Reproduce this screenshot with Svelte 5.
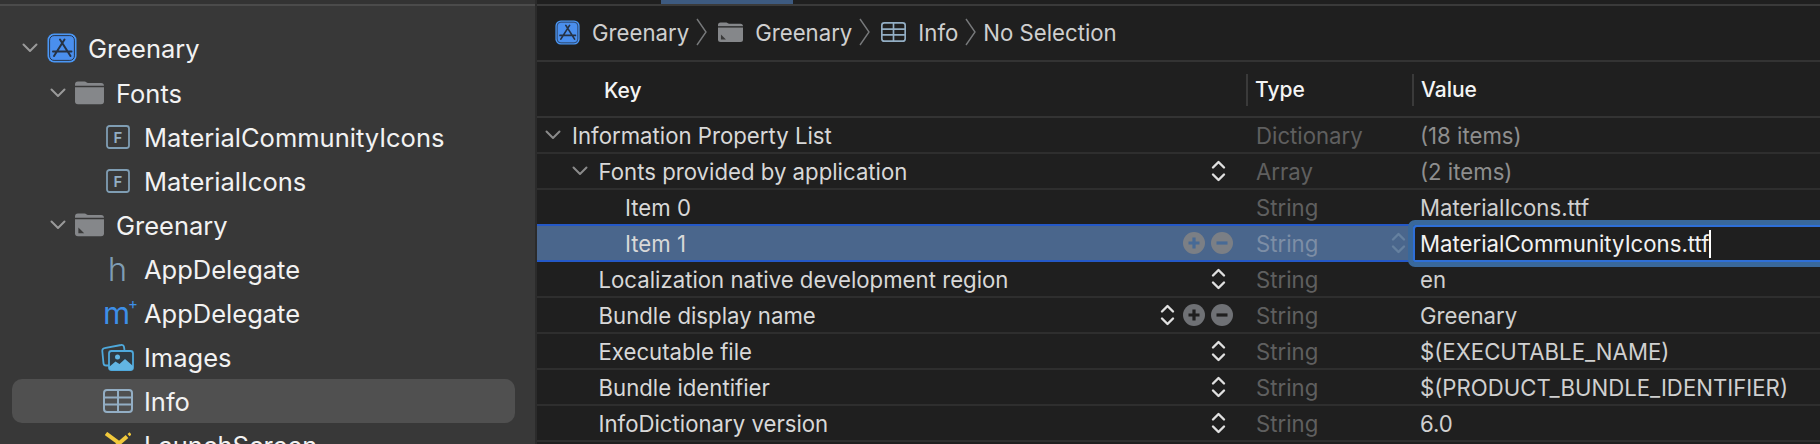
<script>
	const tree = [
		{ depth: 0, open: true, icon: 'app', label: 'Greenary' },
		{ depth: 1, open: true, icon: 'folder', label: 'Fonts' },
		{ depth: 2, icon: 'font', label: 'MaterialCommunityIcons' },
		{ depth: 2, icon: 'font', label: 'MaterialIcons' },
		{ depth: 1, open: true, icon: 'target', label: 'Greenary' },
		{ depth: 2, icon: 'h', label: 'AppDelegate' },
		{ depth: 2, icon: 'm', label: 'AppDelegate' },
		{ depth: 2, icon: 'images', label: 'Images' },
		{ depth: 2, icon: 'table', label: 'Info', selected: true },
		{ depth: 2, icon: 'xib', label: 'LaunchScreen' }
	];

	const rows = [
		{ depth: 0, open: true, key: 'Information Property List', type: 'Dictionary', value: '(18 items)', dim: true },
		{ depth: 1, open: true, key: 'Fonts provided by application', type: 'Array', value: '(2 items)', dim: true, step: true },
		{ depth: 2, key: 'Item 0', type: 'String', value: 'MaterialIcons.ttf' },
		{ depth: 2, key: 'Item 1', type: 'String', value: 'MaterialCommunityIcons.ttf', editing: true },
		{ depth: 1, key: 'Localization native development region', type: 'String', value: 'en', step: true },
		{ depth: 1, key: 'Bundle display name', type: 'String', value: 'Greenary', step: true, hover: true },
		{ depth: 1, key: 'Executable file', type: 'String', value: '$(EXECUTABLE_NAME)', step: true },
		{ depth: 1, key: 'Bundle identifier', type: 'String', value: '$(PRODUCT_BUNDLE_IDENTIFIER)', step: true },
		{ depth: 1, key: 'InfoDictionary version', type: 'String', value: '6.0', step: true },
		{ depth: 1, key: '', type: '', value: '' }
	];
</script>

{#snippet chevron()}
	<svg class="chev" viewBox="0 0 16 10" width="16" height="10">
		<path d="M1.5 1.5 8 8l6.5-6.5" fill="none" stroke="currentColor" stroke-width="2" stroke-linecap="round" stroke-linejoin="round" />
	</svg>
{/snippet}

{#snippet stepper()}
	<svg class="stepper" viewBox="0 0 15 24" width="15" height="24">
		<path d="M2 8.5 7.5 3 13 8.5M2 15.5 7.5 21 13 15.5" fill="none" stroke="currentColor" stroke-width="2.4" stroke-linecap="round" stroke-linejoin="round" />
	</svg>
{/snippet}

{#snippet crumbSep()}
	<svg class="sep" viewBox="0 0 11 28" width="11" height="28">
		<path d="M1 1l9 13-9 13" fill="none" stroke="#77797b" stroke-width="1.4" />
	</svg>
{/snippet}

{#snippet icon(kind, size)}
	{#if kind === 'app'}
		<svg viewBox="0 0 30 30" width={size} height={size}>
			<rect x="0.5" y="0.5" width="29" height="29" rx="6.5" fill="#4a97f6" />
			<rect x="2.6" y="2.6" width="24.8" height="24.8" rx="4.5" fill="#4a8fee" stroke="#27364f" stroke-width="1" />
			<path d="M17.500 6.500 7 23M13 6.500 23.500 23M6 18.500h18.500" fill="none" stroke="#263244" stroke-width="2" stroke-linecap="round" />
		</svg>
	{:else if kind === 'folder'}
		<svg viewBox="0 0 30 24" width={Math.min(size, 29)} height={Math.min(size, 29) * 0.8}>
			<path d="M0 5V3.5A3 3 0 0 1 3 .5h7c1.5 0 2 1.500 3.500 1.500H27a3 3 0 0 1 3 3V5z" fill="#85878a" />
			<path d="M0 6.500h30V21a3 3 0 0 1-3 3H3a3 3 0 0 1-3-3z" fill="#85878a" />
		</svg>
	{:else if kind === 'target'}
		<svg viewBox="0 0 30 24" width={Math.min(size, 29)} height={Math.min(size, 29) * 0.8}>
			<path d="M0 5V3.5A3 3 0 0 1 3 .5h7c1.5 0 2 1.500 3.500 1.500H27a3 3 0 0 1 3 3V5z" fill="#85878a" />
			<path d="M0 6.500h30V21a3 3 0 0 1-3 3H3a3 3 0 0 1-3-3z" fill="#85878a" />
			<path d="M3.500 15v6h6z" fill="#3a3a3a" />
		</svg>
	{:else if kind === 'font'}
		<svg viewBox="0 0 24 24" width="24" height="24">
			<rect x="1" y="1" width="22" height="22" rx="2.500" fill="none" stroke="#7f9db3" stroke-width="1.800" />
			<text x="12" y="17.500" text-anchor="middle" class="fontmark">F</text>
		</svg>
	{:else if kind === 'h'}
		<span class="letter h">h</span>
	{:else if kind === 'm'}
		<span class="letter m">m<sup>+</sup></span>
	{:else if kind === 'images'}
		<svg viewBox="0 0 33 28" width="33" height="28">
			<path d="M8 22.500H5a2.500 2.500 0 0 1-2.500-2.200L1.300 8a2.500 2.500 0 0 1 2.200-2.800L20 2a2.500 2.500 0 0 1 3 2l.5 3" fill="none" stroke="#4fa9dc" stroke-width="1.800" />
			<rect x="8" y="8" width="24" height="19" rx="2.500" fill="#2f3a42" stroke="#4fa9dc" stroke-width="1.800" />
			<circle cx="16.500" cy="14" r="2.500" fill="#62b5e3" />
			<path d="M8 24l6.500-5.500 4 2.500 5.500-5 8 7v1.500a2.500 2.500 0 0 1-2.500 2.500h-19A2.500 2.500 0 0 1 8 24.500z" fill="#62b5e3" />
		</svg>
	{:else if kind === 'table'}
		<svg viewBox="0 0 30 24" width={size} height={size * 0.8}>
			<rect x="1" y="1" width="28" height="22" rx="3" fill="none" stroke="#93aec4" stroke-width="2" />
			<path d="M1 8.500h28M1 15.500h28M15 1v22" stroke="#93aec4" stroke-width="2" />
		</svg>
	{:else if kind === 'xib'}
		<svg viewBox="0 0 26 26" width="26" height="26">
			<path d="M1 1.500l13 9.500" fill="none" stroke="#f1c93c" stroke-width="4" />
			<path d="M11 14 22 4.500" fill="none" stroke="#f1c93c" stroke-width="4" />
			<path d="M23.500 3.200 25.500 1.500" fill="none" stroke="#f1c93c" stroke-width="3" />
		</svg>
	{/if}
{/snippet}

<div class="window">
	<aside class="nav">
		<div class="nav-top"></div>
		<ul>
			{#each tree as item}
				<li class:selected={item.selected} style="padding-left: {3 + item.depth * 28}px">
					<span class="disc">
						{#if item.open}{@render chevron()}{/if}
					</span>
					<span class="nav-icon">{@render icon(item.icon, 30)}</span>
					<span class="nav-label">{item.label}</span>
				</li>
			{/each}
		</ul>
	</aside>

	<main class="editor">
		<div class="tabs"><span class="tab-active"></span></div>
		<nav class="crumbs">
			{@render icon('app', 25)}
			<span class="crumb">Greenary</span>
			{@render crumbSep()}
			<span class="crumb-icon">{@render icon('target', 25)}</span>
			<span class="crumb">Greenary</span>
			{@render crumbSep()}
			<span class="crumb-icon">{@render icon('table', 25)}</span>
			<span class="crumb">Info</span>
			{@render crumbSep()}
			<span class="crumb none">No Selection</span>
		</nav>

		<div class="head">
			<span class="col-key">Key</span>
			<span class="col-type">Type</span>
			<span class="col-value">Value</span>
		</div>

		{#each rows as row}
			<div class="row" class:editing={row.editing}>
				<div class="key" style="padding-left: {8 + row.depth * 26.5}px">
					<span class="tog">
						{#if row.open}{@render chevron()}{/if}
					</span>
					<span class="key-text">{row.key}</span>
					<span class="tools">
						{#if row.hover}
							<span class="hover-step">{@render stepper()}</span>
						{/if}
						{#if row.hover || row.editing}
							<svg class="round" viewBox="0 0 22 22" width="22" height="22">
								<circle cx="11" cy="11" r="11" fill={row.editing ? '#7b7f85' : '#6f7175'} />
								<path d="M11 5.500v11M5.500 11h11" stroke={row.editing ? '#476a96' : '#1f1f1f'} stroke-width="3.200" />
							</svg>
							<svg class="round" viewBox="0 0 22 22" width="22" height="22">
								<circle cx="11" cy="11" r="11" fill={row.editing ? '#7b7f85' : '#6f7175'} />
								<path d="M5.500 11h11" stroke={row.editing ? '#476a96' : '#1f1f1f'} stroke-width="3.200" />
							</svg>
						{:else if row.step}
							<span class="step-slot">{@render stepper()}</span>
						{/if}
					</span>
				</div>
				<div class="type">
					<span>{row.type}</span>
					{#if row.editing}<span class="type-step">{@render stepper()}</span>{/if}
				</div>
				<div class="value" class:dim={row.dim}>
					{#if row.editing}
						<div class="field">{row.value}<i class="caret"></i></div>
					{:else}
						{row.value}
					{/if}
				</div>
			</div>
		{/each}
	</main>
</div>

<style>
	:global(body) {
		background: #1f1f1f;
		overflow: hidden;
	}
	.window {
		display: flex;
		width: 1820px;
		height: 444px;
		overflow: hidden;
		font-family: Inter, 'Liberation Sans', sans-serif;
	}

	/* navigator */
	.nav {
		width: 535px;
		flex: none;
		background: #383838;
		border-right: 2px solid #2b2b2b;
	}
	.nav-top {
		height: 4px;
		border-bottom: 2px solid #4b4b4b;
		background: #333;
		margin-bottom: 20px;
	}
	ul {
		list-style: none;
		margin: 0;
		padding: 0;
	}
	li {
		display: flex;
		align-items: center;
		height: 44px;
		margin: 0 20px 0 12px;
		border-radius: 10px;
		color: #f2f2f2;
		font-size: 25.500px;
	}
	li:nth-child(n + 2) {
		position: relative;
		top: 1px;
	}
	li.selected {
		background: #505050;
	}
	.disc {
		width: 29px;
		flex: none;
		color: #9a9a9a;
		display: flex;
		justify-content: center;
	}
	.nav-icon {
		width: 35px;
		flex: none;
		display: flex;
		justify-content: center;
		align-items: center;
	}
	.nav-label {
		margin-left: 9px;
	}
	.fontmark {
		font: 600 15px Inter, sans-serif;
		fill: #93aec4;
	}
	.letter {
		font-family: Inter, sans-serif;
		line-height: 1;
	}
	.h {
		font-size: 33px;
		font-weight: 300;
		color: #7f9db3;
	}
	.m {
		font-size: 31px;
		font-weight: 400;
		color: #3d8fe8;
		position: relative;
		top: -1px;
		left: -1px;
	}
	.m sup {
		font-size: 15px;
		position: absolute;
		top: -1px;
		left: 25px;
	}

	/* editor */
	.editor {
		flex: 1;
		min-width: 0;
		background: #1f1f1f;
	}
	.tabs {
		height: 4px;
		border-bottom: 2px solid #3a3a3a;
		padding-left: 124px;
	}
	.tab-active {
		display: block;
		width: 132px;
		height: 4px;
		background: #3d5a80;
	}
	.crumbs {
		display: flex;
		align-items: center;
		height: 52px;
		padding-bottom: 2px;
		padding-left: 18px;
		border-bottom: 2px solid #333;
		font-size: 22.200px;
		color: #cfcfcf;
	}
	.crumb {
		margin-left: 12px;
	}
	.crumb-icon {
		display: flex;
		margin-left: 11px;
	}
	.sep {
		margin-left: 7px;
	}
	.none {
		margin-left: 7px;
	}
	.head {
		display: grid;
		grid-template-columns: 709px 166px 1fr;
		height: 52px;
		padding-top: 2px;
		align-items: center;
		border-bottom: 2px solid #333;
		color: #f4f4f4;
		font-size: 21px;
		font-weight: 500;
	}
	.col-key {
		padding-left: 67px;
	}
	.col-type,
	.col-value {
		border-left: 2px solid #3a3a3a;
		padding-left: 7px;
		height: 32px;
		line-height: 32px;
	}
	.row {
		display: grid;
		grid-template-columns: 709px 166px 1fr;
		height: 36px;
		box-sizing: border-box;
		border-bottom: 2px solid #2e2e2e;
		font-size: 22.200px;
		align-items: center;
		position: relative;
	}
	.row.editing {
		height: 38px;
		margin-top: -2px;
		background: #4a668c;
		border-top: 2px solid #2458c7;
		border-bottom: 2px solid #2458c7;
	}
	.key {
		display: flex;
		align-items: center;
		color: #d8d8d8;
		min-width: 0;
	}
	.tog {
		width: 27px;
		flex: none;
		color: #8a8a8a;
		display: flex;
		justify-content: flex-start;
	}
	.key-text {
		flex: 1;
		white-space: nowrap;
	}
	.tools {
		display: flex;
		align-items: center;
		gap: 6px;
		padding-right: 13px;
		color: #e0e0e0;
	}
	.step-slot {
		display: flex;
		padding-right: 7px;
	}
	.hover-step {
		display: flex;
		margin-right: 2px;
	}
	.stepper {
		display: block;
	}
	.type {
		padding-left: 10px;
		color: #5f5f5f;
		display: flex;
		align-items: center;
		justify-content: space-between;
	}
	.editing .type {
		color: #7d8ea6;
	}
	.type-step {
		display: flex;
		color: #65809f;
		padding-right: 6px;
	}
	.value {
		padding-left: 8px;
		color: #d0d0d0;
		white-space: nowrap;
	}
	.value.dim {
		color: #8e8e8e;
	}
	/* the edit box hangs over the neighbouring rows */
	.field {
		position: absolute;
		left: 871px;
		right: 0;
		top: -6px;
		height: 47px;
		box-sizing: border-box;
		border: 5px solid #39689b;
		border-right: 0;
		box-shadow: inset 2px 2px 0 #2e6fd8, inset 0 -2px 0 #2e6fd8;
		background: #1f1f1f;
		color: #f2f2f2;
		padding-left: 7px;
		display: flex;
		align-items: center;
		border-radius: 7px 0 0 7px;
	}
	.caret {
		width: 2px;
		height: 28px;
		background: #fff;
	}
</style>
